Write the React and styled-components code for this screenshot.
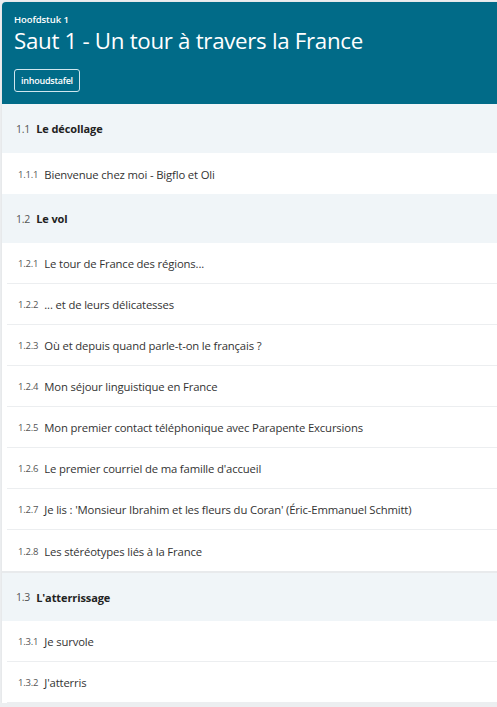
import React from "react";
import styled, { createGlobalStyle } from "styled-components";

const Global = createGlobalStyle`
  html, body { margin: 0; padding: 0; background: #eceef0; }
  body { font-family: "Open Sans", "Noto Sans", sans-serif; -webkit-font-smoothing: antialiased; }
`;

const Card = styled.div`
  margin: 2px 0 0 2px;
  background: #ffffff;
  border-top-left-radius: 4px;
  overflow: hidden;
  box-shadow: 0 0 2px rgba(0, 0, 0, 0.08);
`;

const Header = styled.header`
  background: #016b88;
  color: #ffffff;
  height: 102px;
  box-sizing: border-box;
  padding: 11px 12px 0 12px;
  display: flex;
  flex-direction: column;
  align-items: flex-start;
`;

const Kicker = styled.div`
  font-size: 9.5px;
  font-weight: 600;
  line-height: 13px;
  letter-spacing: -0.1px;
`;

const Title = styled.h1`
  margin: 0;
  font-size: 22.3px;
  font-weight: 400;
  line-height: 30px;
  letter-spacing: -0.3px;
`;

const TocButton = styled.button`
  margin-top: 13px;
  height: 23px;
  padding: 0 6px;
  background: transparent;
  color: #ffffff;
  border: 1px solid #cfe6ee;
  border-radius: 3px;
  font-family: inherit;
  font-size: 9px;
  font-weight: 600;
  letter-spacing: -0.25px;
  cursor: pointer;
`;

const Section = styled.div`
  background: #f0f5f8;
  height: ${(p) => p.$h}px;
  display: flex;
  align-items: center;
  padding-left: 14px;
  border-top: ${(p) => (p.$topLine ? "2px solid #e8eaec" : "none")};
  font-size: 11px;
  color: #222;
`;

const Num = styled.span`
  color: #555;
  font-size: ${(p) => (p.$small ? 9.5 : 10.5)}px;
  margin-right: 6px;
  letter-spacing: -0.2px;
`;

const SectionTitle = styled.span`
  font-weight: 700;
  letter-spacing: -0.1px;
`;

const Item = styled.div`
  padding-left: 5px;
  background: #ffffff;
`;

const ItemInner = styled.div`
  height: 41px;
  box-sizing: border-box;
  padding-top: 1px;
  display: flex;
  align-items: center;
  padding-left: 11px;
  border-bottom: ${(p) => (p.$last ? "none" : "1px solid #eceef0")};
  font-size: 11.3px;
  color: #333;
  letter-spacing: -0.15px;
`;

const data = [
  {
    num: "1.1",
    title: "Le décollage",
    items: [["1.1.1", "Bienvenue chez moi - Bigflo et Oli"]],
  },
  {
    num: "1.2",
    title: "Le vol",
    items: [
      ["1.2.1", "Le tour de France des régions..."],
      ["1.2.2", "... et de leurs délicatesses"],
      ["1.2.3", "Où et depuis quand parle-t-on le français ?"],
      ["1.2.4", "Mon séjour linguistique en France"],
      ["1.2.5", "Mon premier contact téléphonique avec Parapente Excursions"],
      ["1.2.6", "Le premier courriel de ma famille d'accueil"],
      ["1.2.7", "Je lis : 'Monsieur Ibrahim et les fleurs du Coran' (Éric-Emmanuel Schmitt)"],
      ["1.2.8", "Les stéréotypes liés à la France"],
    ],
  },
  {
    num: "1.3",
    title: "L'atterrissage",
    items: [
      ["1.3.1", "Je survole"],
      ["1.3.2", "J'atterris"],
    ],
  },
];

export default function App() {
  return (
    <>
      <Global />
      <Card>
        <Header>
          <Kicker>Hoofdstuk 1</Kicker>
          <Title>Saut 1 - Un tour à travers la France</Title>
          <TocButton>inhoudstafel</TocButton>
        </Header>
        {data.map((s, si) => (
          <React.Fragment key={s.num}>
            <Section $h={si === 2 ? 48 : 49} $topLine={si === 2}>
              <Num>{s.num}</Num>
              <SectionTitle>{s.title}</SectionTitle>
            </Section>
            {s.items.map(([n, t], i) => (
              <Item key={n}>
                <ItemInner $last={i === s.items.length - 1 && si !== 2}>
                  <Num $small>{n}</Num>
                  {t}
                </ItemInner>
              </Item>
            ))}
          </React.Fragment>
        ))}
      </Card>
    </>
  );
}
